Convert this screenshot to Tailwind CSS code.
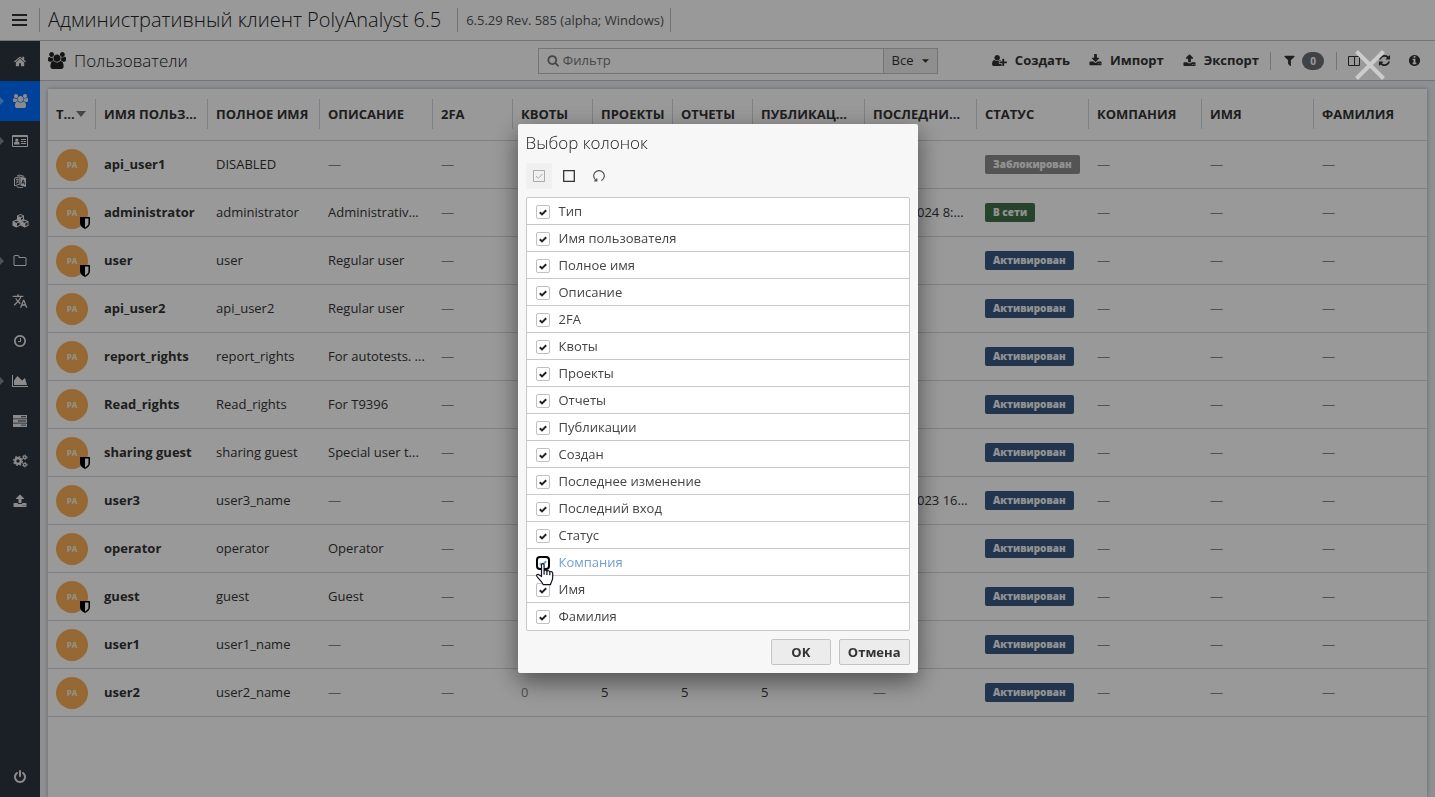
<!DOCTYPE html>
<html lang="ru">
<head>
<meta charset="utf-8">
<title>Административный клиент PolyAnalyst 6.5</title>
<script src="https://cdn.jsdelivr.net/npm/@tailwindcss/browser@4"></script>
</head>
<body class="h-screen overflow-hidden bg-white font-['Open_Sans',sans-serif] text-[13px] text-[#333]">

<svg class="hidden" aria-hidden="true">
  <symbol id="home" viewBox="0 0 1792 1792"><path d="M1408 992v480q0 26-19 45t-45 19h-384v-384h-256v384h-384q-26 0-45-19t-19-45v-480q0-1 .5-3t.5-3l575-474 575 474q1 2 1 6zm223-69l-62 74q-8 9-21 11h-3q-13 0-21-7l-692-577-692 577q-12 8-24 7-13-2-21-11l-62-74q-8-10-7-23.500t11-21.500l719-599q32-26 76-26t76 26l244 204v-195q0-14 9-23t23-9h192q14 0 23 9t9 23v408l219 182q10 8 11 21.500t-7 23.500z"/></symbol>
  <symbol id="users" viewBox="0 0 1920 1792"><path d="M593 896q-162 5-265 128h-134q-82 0-138-40.500t-56-118.500q0-353 124-353 6 0 43.500 21t97.500 42.500 119 21.500q67 0 133-23-5 37-5 66 0 159 93 292zm1071 637q0 120-73 189.500t-194 69.500h-874q-121 0-194-69.500t-73-189.500q0-53 3.500-103.500t14-109 26.500-108.500 43-97.500 62-81 85.500-53.500 111.500-20q10 0 43 21.500t73 48 107 48 135 21.500 135-21.500 107-48 73-48 43-21.500q61 0 111.500 20t85.500 53.500 62 81 43 97.500 26.500 108.500 14 109 3.500 103.500zm-1024-1277q0 106-75 181t-181 75-181-75-75-181 75-181 181-75 181 75 75 181zm704 384q0 159-112.500 271.500t-271.500 112.500-271.500-112.500-112.500-271.500 112.500-271.500 271.500-112.500 271.500 112.500 112.500 271.500zm576 225q0 78-56 118.500t-138 40.500h-134q-103-123-265-128 93-133 93-292 0-29-5-66 66 23 133 23 59 0 119-21.500t97.500-42.500 43.500-21q124 0 124 353zm-128-609q0 106-75 181t-181 75-181-75-75-181 75-181 181-75 181 75 75 181z"/></symbol>
  <symbol id="card" viewBox="0 0 16 14"><path fill-rule="evenodd" d="M1 1h14a1 1 0 0 1 1 1v10a1 1 0 0 1-1 1H1a1 1 0 0 1-1-1V2a1 1 0 0 1 1-1zm0 2v9h14V3z"/><circle cx="4.800" cy="6" r="1.600"/><path d="M2 10.500c0-2.200.8-3 1.600-3h2.400c.8 0 1.600.8 1.600 3zM9 5h5v1H9zM9 7h2.400v1H9zM12 7h2v1h-2zM9 9h5v1H9z"/></symbol>
  <symbol id="lang" viewBox="0 0 14 14"><path fill-rule="evenodd" d="M7.500 2.500 13 4v9l-5.500-1.600zm2.300 3L8.400 9.800l.9.300.3-1 1.400.4.300 1.100.9.200-1.400-4.800zm.5 1.200.4 1.800-.9-.3z"/><path fill="none" stroke="currentColor" d="M6.800 2.700 1.500 4.200v7.600l5.300-1.600zM3 5.800l2.600-.7M4.400 4.500v1M3.200 9.200c1-.6 1.700-1.700 2-3.500M3.400 6.800l2 2M4 2l2.200-1 5 1.400M3.500 12.600c2 1 4.500 1.200 6.500.6"/></symbol>
  <symbol id="cubes" viewBox="0 0 17 14"><path fill-rule="evenodd" d="M8.500 0 12 1.400v3.900l4.500 1.900v4.500L12.700 13.500 8.500 11.600 4.300 13.500.5 11.700V7.200L5 5.300V1.400zM6 2l2.500 1L11 2l-2.500-.9zm3 3.900 2-.9V3.300l-2 .8zM2 7.700l2.300 1 2.500-1-2.500-1zm3 4.400 2.600-1.200V8.500L5 9.600zm5.200-4.400 2.500 1 2.300-1-2.300-1zm3.200 4.400 2.200-1.100V8.500l-2.200 1.100z"/></symbol>
  <symbol id="folder" viewBox="0 0 1792 1792"><path d="M1600 1312v-704q0-40-28-68t-68-28h-704q-40 0-68-28t-28-68v-64q0-40-28-68t-68-28h-320q-40 0-68 28t-28 68v960q0 40 28 68t68 28h1216q40 0 68-28t28-68zm128-704v704q0 92-66 158t-158 66h-1216q-92 0-158-66t-66-158v-960q0-92 66-158t158-66h320q92 0 158 66t66 158v32h672q92 0 158 66t66 158z"/></symbol>
  <symbol id="translate" viewBox="0 0 24 24"><path d="M12.870 15.070l-2.540-2.510.03-.03c1.740-1.940 2.980-4.170 3.710-6.530H17V4h-7V2H8v2H1v1.990h11.170C11.500 7.920 10.440 9.750 9 11.350 8.070 10.320 7.300 9.190 6.690 8h-2c.73 1.630 1.730 3.170 2.980 4.560l-5.090 5.020L4 19l5-5 3.110 3.110.76-2.040zM18.500 10h-2L12 22h2l1.120-3h4.750L21 22h2l-4.500-12zm-2.620 7l1.620-4.330L19.120 17h-3.240z"/></symbol>
  <symbol id="clock" viewBox="0 0 1792 1792"><path d="M1024 544v448q0 14-9 23t-23 9h-320q-14 0-23-9t-9-23v-64q0-14 9-23t23-9h224v-352q0-14 9-23t23-9h64q14 0 23 9t9 23zm416 352q0-148-73-273t-198-198-273-73-273 73-198 198-73 273 73 273 198 198 273 73 273-73 198-198 73-273zm224 0q0 209-103 385.500t-279.500 279.500-385.500 103-385.500-103-279.500-279.500-103-385.500 103-385.500 279.500-279.500 385.500-103 385.500 103 279.500 279.500 103 385.500z"/></symbol>
  <symbol id="chart" viewBox="0 0 2048 1792"><path d="M2048 1536v128h-2048v-1536h128v1408h1920zm-384-1024l256 896h-1664v-576l448-576 576 576z"/></symbol>
  <symbol id="server" viewBox="0 0 14 12"><path fill-rule="evenodd" d="M0 0h14v3.500H0zM0 4.200h14v3.500H0zM0 8.400h14v3.500H0zM8 1.300v.9h5v-.9zM5 5.500v.9h8v-.9zM8 9.700v.9h5v-.9z"/></symbol>
  <symbol id="cogs" viewBox="0 0 15 14"><g fill="none" stroke="currentColor"><circle cx="5" cy="7" r="2.800" stroke-width="2.200"/><circle cx="5" cy="7" r="4.400" stroke-width="1.300" stroke-dasharray="1.730 1.730"/><circle cx="11.800" cy="3.300" r="1.400" stroke-width="1.200"/><circle cx="11.800" cy="3.300" r="2.300" stroke-width=".9" stroke-dasharray="1.200 1.200"/><circle cx="11.800" cy="10.700" r="1.400" stroke-width="1.200"/><circle cx="11.800" cy="10.700" r="2.300" stroke-width=".9" stroke-dasharray="1.200 1.200"/></g></symbol>
  <symbol id="upload" viewBox="0 0 1792 1792"><path d="M1344 1472q0-26-19-45t-45-19-45 19-19 45 19 45 45 19 45-19 19-45zm256 0q0-26-19-45t-45-19-45 19-19 45 19 45 45 19 45-19 19-45zm128-224v320q0 40-28 68t-68 28h-1472q-40 0-68-28t-28-68v-320q0-40 28-68t68-28h427q21 56 70.500 92t110.500 36h256q61 0 110.500-36t70.500-92h427q40 0 68 28t28 68zm-325-648q-17 40-59 40h-256v448q0 26-19 45t-45 19h-256q-26 0-45-19t-19-45v-448h-256q-42 0-59-40-17-39 14-69l448-448q18-19 45-19t45 19l448 448q31 30 14 69z"/></symbol>
  <symbol id="download" viewBox="0 0 1792 1792"><path d="M1344 1344q0-26-19-45t-45-19-45 19-19 45 19 45 45 19 45-19 19-45zm256 0q0-26-19-45t-45-19-45 19-19 45 19 45 45 19 45-19 19-45zm128-224v320q0 40-28 68t-68 28h-1472q-40 0-68-28t-28-68v-320q0-40 28-68t68-28h465l135 136q58 56 136 56t136-56l136-136h464q40 0 68 28t28 68zm-325-569q17 41-14 70l-448 448q-18 19-45 19t-45-19l-448-448q-31-29-14-70 17-39 59-39h256v-448q0-26 19-45t45-19h256q26 0 45 19t19 45v448h256q42 0 59 39z"/></symbol>
  <symbol id="power" viewBox="0 0 1792 1792"><path d="M1664 896q0 156-61 298t-164 245-245 164-298 61-298-61-245-164-164-245-61-298q0-182 80.500-343t226.500-270q43-32 95.500-25t83.500 50q32 42 24.500 94.500t-49.500 84.500q-98 74-151.500 181t-53.500 228q0 104 40.500 198.500t109.500 163.500 163.500 109.500 198.500 40.500 198.500-40.500 163.500-109.500 109.500-163.500 40.500-198.500q0-121-53.500-228t-151.500-181q-42-32-49.500-84.500t24.500-94.500q31-43 84-50t95 25q146 109 226.500 270t80.500 343zm-640-768v640q0 52-38 90t-90 38-90-38-38-90v-640q0-52 38-90t90-38 90 38 38 90z"/></symbol>
  <symbol id="search" viewBox="0 0 1792 1792"><path d="M1216 832q0-185-131.500-316.500t-316.500-131.500-316.500 131.500-131.500 316.500 131.500 316.500 316.500 131.500 316.500-131.500 131.500-316.500zm512 832q0 52-38 90t-90 38q-54 0-90-38l-343-342q-179 124-399 124-143 0-273.500-55.500t-225-150-150-225-55.500-273.500 55.500-273.500 150-225 225-150 273.500-55.500 273.500 55.500 225 150 150 225 55.500 273.500q0 220-124 399l343 343q37 37 37 90z"/></symbol>
  <symbol id="userplus" viewBox="0 0 2048 1792"><path d="M704 896q-159 0-271.500-112.500t-112.500-271.500 112.500-271.500 271.500-112.500 271.500 112.500 112.500 271.500-112.500 271.500-271.500 112.500zm960 128h352q13 0 22.500 9.500t9.500 22.500v192q0 13-9.500 22.500t-22.500 9.500h-352v352q0 13-9.500 22.500t-22.500 9.500h-192q-13 0-22.500-9.500t-9.500-22.500v-352h-352q-13 0-22.500-9.500t-9.500-22.500v-192q0-13 9.500-22.500t22.500-9.500h352v-352q0-13 9.500-22.500t22.500-9.500h192q13 0 22.500 9.500t9.500 22.500v352zm-736 224q0 52 38 90t90 38h256v238q-68 50-171 50h-874q-121 0-194-69t-73-190q0-53 3.500-103.500t14-109 26.500-108.500 43-97.500 62-81 85.500-53.500 111.500-20q19 0 39 17 79 61 154.500 91.500t164.500 30.500 164.500-30.500 154.500-91.500q20-17 39-17 132 0 217 96h-223q-52 0-90 38t-38 90v192z"/></symbol>
  <symbol id="filter" viewBox="0 0 1792 1792"><path d="M1595 295q17 41-14 70l-493 493v742q0 42-39 59-13 5-25 5-27 0-45-19l-256-256q-19-19-19-45v-486l-493-493q-31-29-14-70 17-39 59-39h1280q42 0 59 39z"/></symbol>
  <symbol id="columns" viewBox="0 0 12 12"><path fill="none" stroke="currentColor" d="M.5 1.500h11v9H.5zM6.500 1.500v9"/></symbol>
  <symbol id="refresh" viewBox="0 0 1792 1792"><path d="M1639 1056q0 5-1 7-64 268-268 434.500t-478 166.500q-146 0-282.500-55t-243.500-157l-129 129q-19 19-45 19t-45-19-19-45v-448q0-26 19-45t45-19h448q26 0 45 19t19 45-19 45l-137 137q71 66 161 102t187 36q134 0 250-65t186-179q11-17 53-117 8-23 30-23h192q13 0 22.500 9.500t9.500 22.500zm25-800v448q0 26-19 45t-45 19h-448q-26 0-45-19t-19-45 19-45l138-138q-148-137-349-137-134 0-250 65t-186 179q-11 17-53 117-8 23-30 23h-199q-13 0-22.500-9.500t-9.500-22.500v-7q65-268 270-434.500t480-166.500q146 0 284 55.500t245 156.500l130-129q19-19 45-19t45 19 19 45z"/></symbol>
  <symbol id="info" viewBox="0 0 1792 1792"><path d="M1152 1376v-160q0-14-9-23t-23-9h-96v-512q0-14-9-23t-23-9h-320q-14 0-23 9t-9 23v160q0 14 9 23t23 9h96v320h-96q-14 0-23 9t-9 23v160q0 14 9 23t23 9h448q14 0 23-9t9-23zm-128-896v-160q0-14-9-23t-23-9h-192q-14 0-23 9t-9 23v160q0 14 9 23t23 9h192q14 0 23-9t9-23zm640 416q0 209-103 385.500t-279.500 279.500-385.500 103-385.500-103-279.500-279.500-103-385.500 103-385.500 279.500-279.500 385.500-103 385.500 103 279.500 279.500 103 385.500z"/></symbol>
  <symbol id="shield" viewBox="0 0 10 12"><path d="M0 0h10v6c0 3-2.500 5-5 6C2.500 11 0 9 0 6z"/><path fill="#fff" d="M5 1.500h3.500V6c0 2-1.500 3.500-3.500 4.400z"/></symbol>
  <symbol id="check" viewBox="0 0 8 7"><path fill="none" stroke="currentColor" stroke-width="2" d="M.8 3.200 3 5.400 7.200 1.200"/></symbol>
</svg>

<div class="flex h-full flex-col">
  <header class="flex h-[41px] shrink-0 items-center border-b border-[#c4c4c4]">
    <button class="flex w-[39px] justify-center" aria-label="Меню">
      <svg class="h-3 w-[15px]" viewBox="0 0 15 12" fill="currentColor"><path d="M0 0h15v2H0zM0 5h15v2H0zM0 10h15v2H0z"/></svg>
    </button>
    <h1 class="border-l border-[#c4c4c4] pr-4 pl-2 text-xl leading-6 font-light text-[#222]">Административный клиент PolyAnalyst 6.5</h1>
    <span class="border-x border-[#c4c4c4] pr-1.5 pl-2 leading-6 text-[#555]">6.5.29 Rev. 585 (alpha; Windows)</span>
  </header>

  <div class="flex min-h-0 flex-1">
    <nav id="nav" class="flex w-10 shrink-0 flex-col bg-[#2d3540] text-[#e8e8e8]"></nav>

    <main class="flex min-w-0 flex-1 flex-col bg-[#edeff3]">
      <div class="grid h-10 shrink-0 grid-cols-[1fr_400px_1fr] items-center border-b border-[#c4c4c4] bg-white">
        <h2 class="flex items-center gap-2 pl-2 text-[17px] leading-6 font-light text-[#222]"><svg class="h-[17px] w-[18px] fill-current"><use href="#users"/></svg>Пользователи</h2>
        <form class="flex h-[26px]">
          <label class="flex flex-1 items-center gap-1 border border-[#c4c4c4] pl-2 text-[#777]">
            <svg class="size-[13px] fill-current"><use href="#search"/></svg>
            <input type="text" placeholder="Фильтр" aria-label="Фильтр" class="w-full outline-none placeholder:text-[#777]">
          </label>
          <button type="button" class="flex w-[54px] items-center justify-between border border-l-0 border-[#c4c4c4] bg-[#eee] px-2">Все
            <svg class="h-1 w-[7px] fill-current" viewBox="0 0 8 4"><path d="M0 0h8L4 4z"/></svg>
          </button>
        </form>
        <div class="flex items-center justify-end pr-[14px] font-bold">
          <button class="mr-[19px] flex items-center gap-2"><svg class="h-[13px] w-[15px] fill-current"><use href="#userplus"/></svg>Создать</button>
          <button class="mr-[19px] flex items-center gap-2"><svg class="size-[13px] fill-current"><use href="#download"/></svg>Импорт</button>
          <button class="mr-[11px] flex items-center gap-2"><svg class="size-[13px] fill-current"><use href="#upload"/></svg>Экспорт</button>
          <button class="flex items-center gap-1.5 border-x border-[#c4c4c4] px-3" aria-label="Фильтры: 0"><svg class="size-[13px] fill-current"><use href="#filter"/></svg><span class="h-[18px] w-[22px] rounded-full bg-[#6b6f73] text-[10px] leading-[18px] text-white">0</span></button>
          <button class="mr-[18px] ml-[11px]" aria-label="Колонки"><svg class="size-3"><use href="#columns"/></svg></button>
          <button class="mr-[17px]" aria-label="Обновить"><svg class="size-[13px] fill-current"><use href="#refresh"/></svg></button>
          <button aria-label="Информация"><svg class="size-[13px] fill-current"><use href="#info"/></svg></button>
        </div>
      </div>

      <section class="mx-2 mt-2 flex-1 overflow-hidden bg-white shadow-[0_0_4px_rgba(0,0,0,0.3)]">
        <table class="w-full table-fixed border-collapse text-left">
          <colgroup>
            <col class="w-12"><col class="w-28"><col class="w-28"><col class="w-[113px]"><col class="w-20"><col class="w-20"><col class="w-20"><col class="w-20"><col class="w-28"><col class="w-28"><col class="w-28"><col class="w-[113px]"><col class="w-28"><col>
          </colgroup>
          <thead><tr id="head" class="h-[51px] border-b border-[#d3d6de]"></tr></thead>
          <tbody id="rows"></tbody>
        </table>
      </section>
    </main>
  </div>
</div>

<div class="fixed inset-0 flex items-center justify-center bg-black/40">
  <button class="absolute top-[50px] right-[50px]" aria-label="Закрыть">
    <svg class="size-[30px]" viewBox="0 0 30 30" fill="none" stroke="#ccc" stroke-width="4"><path d="M1.500 1.500l27 27M28.500 1.500l-27 27"/></svg>
  </button>
  <div role="dialog" aria-labelledby="title" class="flex w-[400px] flex-col gap-2 rounded-xs bg-[#f7f7f7] px-2 pt-[7px] pb-2 shadow-[0_8px_24px_rgba(0,0,0,0.5)]">
    <h2 id="title" class="text-[17px] leading-6 font-light text-[#222]">Выбор колонок</h2>
    <div class="flex gap-1">
      <button disabled class="grid size-[26px] place-items-center bg-[#f0f0f0] text-[#aaa]" aria-label="Выбрать все"><svg class="size-3" viewBox="0 0 12 12" fill="none" stroke="currentColor"><path d="M.5.5h11v11H.5zM3 6l2.300 2.300L9.500 4"/></svg></button>
      <button class="grid size-[26px] place-items-center" aria-label="Снять выбор"><svg class="size-3" viewBox="0 0 12 12" fill="none" stroke="currentColor" stroke-width="1.300"><path d="M.7.7h10.600v10.600H.7z"/></svg></button>
      <button class="grid size-[26px] place-items-center text-[#555]" aria-label="Сбросить"><svg class="size-3" viewBox="0 0 12 12" fill="none" stroke="currentColor" stroke-width="1.200"><path d="M3.600 10.600A5.300 5.300 0 1 1 8.400 10.600M1.200 10.800h2.600V8.600"/></svg></button>
    </div>
    <ul id="cols" class="divide-y divide-[#c8c8c8] rounded-xs border border-[#c8c8c8] bg-white pb-px text-[#444]"></ul>
    <div class="flex justify-end gap-2 font-bold">
      <button class="h-[26px] w-[60px] rounded-xs border border-[#c4c4c4] bg-[#ececec] pt-px">OK</button>
      <button class="h-[26px] rounded-xs border border-[#c4c4c4] bg-[#ececec] px-2 pt-px">Отмена</button>
    </div>
  </div>
</div>

<script>
const nav = [['home','Главная','size-[13px]'],['users','Пользователи','h-[14px] w-[15px]',1],['card','Группы','h-[14px] w-4',1],['lang','Языки','size-[14px]'],['cubes','Модули','h-[14px] w-[17px]'],['folder','Проекты','size-[14px]',1],['translate','Перевод','size-4'],['clock','Расписание','size-[14px]'],['chart','Статистика','h-[14px] w-4',1],['server','Серверы','h-3 w-[14px]'],['cogs','Настройки','h-[14px] w-[15px]'],['upload','Загрузка','size-[14px]'],['power','Выход','size-[14px]']];
document.getElementById('nav').innerHTML = nav.map(([id, label, size, arrow]) => `
  <a href="#${id}" aria-label="${label}" class="relative flex h-10 shrink-0 items-center justify-center ${id === 'users' ? 'bg-[#006eff]' : ''} ${id === 'power' ? 'mt-auto' : ''}">
    ${arrow ? '<svg class="absolute top-4 left-0 h-2 w-1 fill-white/40" viewBox="0 0 4 8"><path d="M0 0l4 4-4 4z"/></svg>' : ''}
    <svg class="${size} fill-current"><use href="#${id}"/></svg></a>`).join('');

const heads = ['Тип','ИМЯ ПОЛЬЗОВАТЕЛЯ','ПОЛНОЕ ИМЯ','ОПИСАНИЕ','2FA','КВОТЫ','ПРОЕКТЫ','ОТЧЕТЫ','ПУБЛИКАЦИИ','ПОСЛЕДНИЙ ВХОД','СТАТУС','КОМПАНИЯ','ИМЯ','ФАМИЛИЯ'];
document.getElementById('head').innerHTML = heads.map((h, i) => `
  <th class="p-0"><div class="flex h-[30px] items-center pl-2 ${i < 13 ? 'border-r border-[#d4d4e0]' : ''} ${i === 0 ? 'pr-[9px]' : i === 6 ? 'pr-1' : 'pr-2'}">
    <span class="${i ? 'truncate' : 'w-5 overflow-hidden'}">${i ? h : 'Т...'}</span>${i ? '' : '<svg class="h-[6px] w-[10px] shrink-0 fill-[#777]" viewBox="0 0 10 6"><path d="M0 0h10L5 6z"/></svg>'}</div></th>`).join('');

const dash = '<span class="text-[#888]">—</span>';
const users = [
  ['api_user1','DISABLED','',0,'','b'],
  ['administrator','administrator','Administrativ...',1,'02.04.2024 8:00:12','n'],
  ['user','user','Regular user',1,'',''],
  ['api_user2','api_user2','Regular user',0,'',''],
  ['report_rights','report_rights','For autotests. ...',0,'',''],
  ['Read_rights','Read_rights','For T9396',0,'',''],
  ['sharing guest','sharing guest','Special user t...',1,'',''],
  ['user3','user3_name','',0,'02.11.2023 16:00',''],
  ['operator','operator','Operator',0,'',''],
  ['guest','guest','Guest',1,'',''],
  ['user1','user1_name','',0,'',''],
  ['user2','user2_name','',0,'','']];
const status = {
  b: '<span class="block w-fit rounded-xs bg-[#8d8d8d] px-2 text-[10px] leading-[19px] font-extrabold text-[#f4f4f4]">Заблокирован</span>',
  n: '<span class="block w-fit rounded-xs bg-[#40724a] px-2 text-[10px] leading-[19px] font-extrabold text-[#f4f4f4]">В сети</span>',
  '': '<span class="block w-fit rounded-xs bg-[#375983] px-2 text-[10px] leading-[19px] font-extrabold text-[#f4f4f4]">Активирован</span>'};
document.getElementById('rows').innerHTML = users.map(([login, name, desc, shield, last, st]) => `
  <tr class="h-12 border-b border-[#d3d6de]">
    <td class="px-2 pt-px"><div class="relative grid size-8 place-items-center rounded-full bg-[#fab057] text-[8px] font-bold text-[#f4f4f4]">PA${shield ? '<svg class="absolute -right-0.5 bottom-0 h-3 w-2.5"><use href="#shield"/></svg>' : ''}</div></td>
    ${[`<b>${login}</b>`, name, desc || dash, dash, '<span class="text-[#888]">0</span>', '5', '5', '5', last || dash, status[st], dash, dash, dash].map((c, i) => `<td class="truncate pt-px pl-2 ${i === 2 ? 'pr-1' : 'pr-2'}">${c}</td>`).join('')}
  </tr>`).join('');

const cols = ['Тип','Имя пользователя','Полное имя','Описание','2FA','Квоты','Проекты','Отчеты','Публикации','Создан','Последнее изменение','Последний вход','Статус','Компания','Имя','Фамилия'];
document.getElementById('cols').innerHTML = cols.map(c => {
  const hot = c === 'Компания';
  return `<li><label class="flex h-[26px] items-center gap-[9px] pt-px pl-[9px] ${hot ? 'text-[#6f9fcf]' : ''}">
    <span class="relative grid size-[14px] place-items-center">
      <input type="checkbox" checked class="size-[14px] appearance-none bg-white ${hot ? 'rounded-sm border-2 border-black' : 'rounded-xs border border-[#c0c0c0]'}">
      <svg class="pointer-events-none absolute top-1 left-[3px] h-[7px] w-2 ${hot ? 'text-[#6f9fcf]' : 'text-[#222]'}"><use href="#check"/></svg>
      ${hot ? '<svg class="pointer-events-none absolute top-[7px] left-0 z-10 h-[23px] w-[18px]" viewBox="0 0 18 23"><path fill="#fff" stroke="#112" stroke-width="1.200" stroke-linejoin="round" d="M5.500 13.500V2.200c0-2 2.600-2 2.600 0v6c.3-1.500 2.600-1.400 2.800.3.400-1.200 2.700-1 2.900.6.600-1 2.700-.8 2.900 1v4.500c0 3-1.700 4-2.200 7H7.200C6.500 19 3.500 17 1 13.500c-1-1.700.8-2.800 2-1.800zM8.100 8.200v3.500M10.900 8.500v3.500M13.800 9.100v3.200"/></svg>' : ''}
    </span>${c}</label></li>`;
}).join('');
</script>
</body>
</html>
